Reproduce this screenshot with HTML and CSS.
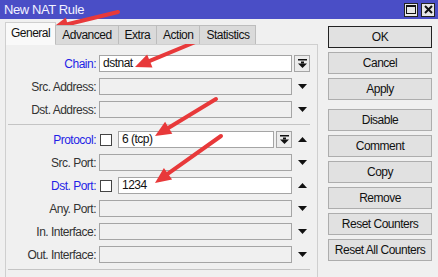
FILE: index.html
```html
<!DOCTYPE html>
<html lang="en">
<head>
    <meta charset="UTF-8">
    <title>New NAT Rule</title>
    <link rel="stylesheet" href="styles.css">
</head>
<body>

<div class="window">
    <div class="titlebar">
        <span class="title">New NAT Rule</span>
        <div class="title-btns">
            <span class="tbtn">
                <svg width="10" height="9" viewBox="0 0 10 9"><rect x="0.5" y="0.5" width="9" height="8" fill="none" stroke="#111"/><rect x="0" y="0" width="10" height="2" fill="#111"/></svg>
            </span>
            <span class="tbtn">
                <svg width="9" height="9" viewBox="0 0 9 9"><path d="M1 1 L8 8 M8 1 L1 8" stroke="#111" stroke-width="2"/></svg>
            </span>
        </div>
    </div>

    <div class="content">
        <div class="editor">
            <div class="tabs">
                <span class="tab active">General</span>
                <span class="tab">Advanced</span>
                <span class="tab">Extra</span>
                <span class="tab">Action</span>
                <span class="tab">Statistics</span>
            </div>
            <div class="panel">
                <div class="row">
                    <label class="lbl blue">Chain:</label>
                    <div class="field">
                        <span class="input">dstnat</span>
                    </div>
                    <span class="ddbtn side-btn">
                        <svg width="9" height="9" viewBox="0 0 9 9"><rect x="0" y="0" width="9" height="1.5" fill="#111"/><rect x="3" y="2.5" width="3" height="2" fill="#111"/><polygon points="0,4.5 9,4.5 4.5,9" fill="#111"/></svg>
                    </span>
                </div>
                <div class="row">
                    <label class="lbl">Src. Address:</label>
                    <div class="field"><span class="input off"></span></div>
                    <span class="side"><svg width="9" height="5" viewBox="0 0 9 5"><polygon points="0,0 9,0 4.5,5" fill="#111"/></svg></span>
                </div>
                <div class="row">
                    <label class="lbl">Dst. Address:</label>
                    <div class="field"><span class="input off"></span></div>
                    <span class="side"><svg width="9" height="5" viewBox="0 0 9 5"><polygon points="0,0 9,0 4.5,5" fill="#111"/></svg></span>
                </div>

                <div class="sep"></div>

                <div class="row">
                    <label class="lbl blue">Protocol:</label>
                    <div class="field">
                        <span class="chk"></span>
                        <span class="input">6 (tcp)</span>
                        <span class="ddbtn">
                            <svg width="9" height="9" viewBox="0 0 9 9"><rect x="0" y="0" width="9" height="1.5" fill="#111"/><rect x="3" y="2.5" width="3" height="2" fill="#111"/><polygon points="0,4.5 9,4.5 4.5,9" fill="#111"/></svg>
                        </span>
                    </div>
                    <span class="side"><svg width="9" height="5" viewBox="0 0 9 5"><polygon points="0,5 9,5 4.5,0" fill="#111"/></svg></span>
                </div>
                <div class="row">
                    <label class="lbl">Src. Port:</label>
                    <div class="field"><span class="input off"></span></div>
                    <span class="side"><svg width="9" height="5" viewBox="0 0 9 5"><polygon points="0,0 9,0 4.5,5" fill="#111"/></svg></span>
                </div>
                <div class="row">
                    <label class="lbl blue">Dst. Port:</label>
                    <div class="field">
                        <span class="chk"></span>
                        <span class="input">1234</span>
                    </div>
                    <span class="side"><svg width="9" height="5" viewBox="0 0 9 5"><polygon points="0,5 9,5 4.5,0" fill="#111"/></svg></span>
                </div>
                <div class="row">
                    <label class="lbl">Any. Port:</label>
                    <div class="field"><span class="input off"></span></div>
                    <span class="side"><svg width="9" height="5" viewBox="0 0 9 5"><polygon points="0,0 9,0 4.5,5" fill="#111"/></svg></span>
                </div>
                <div class="row">
                    <label class="lbl">In. Interface:</label>
                    <div class="field"><span class="input off"></span></div>
                    <span class="side"><svg width="9" height="5" viewBox="0 0 9 5"><polygon points="0,0 9,0 4.5,5" fill="#111"/></svg></span>
                </div>
                <div class="row">
                    <label class="lbl">Out. Interface:</label>
                    <div class="field"><span class="input off"></span></div>
                    <span class="side"><svg width="9" height="5" viewBox="0 0 9 5"><polygon points="0,0 9,0 4.5,5" fill="#111"/></svg></span>
                </div>

                <div class="sep"></div>
            </div>
        </div>

        <div class="actions">
            <button class="btn default">OK</button>
            <button class="btn">Cancel</button>
            <button class="btn">Apply</button>
            <button class="btn group">Disable</button>
            <button class="btn">Comment</button>
            <button class="btn">Copy</button>
            <button class="btn">Remove</button>
            <button class="btn">Reset Counters</button>
            <button class="btn">Reset All Counters</button>
        </div>
    </div>

    <!-- red annotation arrows -->
    <svg class="marks" width="438" height="277" viewBox="0 0 438 277">
        <g stroke="#e8393a" stroke-width="4" stroke-linecap="round" fill="#e8393a">
            <line x1="118" y1="12" x2="67.5" y2="24.2"/>
            <polygon stroke="none" points="52,28 65.9,17.4 69.2,31"/>
            <line x1="205" y1="38" x2="149.8" y2="60.9"/>
            <polygon stroke="none" points="135,67 147.1,54.4 152.5,67.4"/>
            <line x1="216" y1="99" x2="168.7" y2="127.7"/>
            <polygon stroke="none" points="155,136 165.1,121.7 172.3,133.7"/>
            <line x1="221" y1="136" x2="168" y2="173.7"/>
            <polygon stroke="none" points="155,183 163.9,168 172.1,179.4"/>
        </g>
    </svg>
</div>

</body>
</html>
```

FILE: styles.css
```css
body {
    margin: 0;
    padding: 0;
    background: #f0f0f0;
    overflow: hidden;
    font-family: 'Liberation Sans', Arial, sans-serif;
    font-size: 12px;
    letter-spacing: -0.5px;
    color: #111;
}
.window {
    position: relative;
    width: 438px;
    height: 277px;
    overflow: hidden;
    background: #f0f0f0;
}
.titlebar {
    height: 19px;
    background: #4a4ec6;
    display: flex;
    align-items: center;
    justify-content: space-between;
    padding: 0 3px 0 4px;
}
.title {
    color: #f2f2ff;
    font-size: 13px;
    letter-spacing: -0.4px;
}
.title-btns {
    display: flex;
    gap: 3px;
}
.tbtn {
    width: 14px;
    height: 14px;
    box-sizing: border-box;
    border: 1px solid #222;
    background: #e6e6e6;
    display: flex;
    align-items: center;
    justify-content: center;
}
.content {
    display: flex;
    padding-left: 5px;
    gap: 10px;
}
.editor {
    width: 313px;
}
.tabs {
    display: flex;
    align-items: flex-end;
    height: 22px;
    margin-top: 3px;
    position: relative;
    z-index: 1;
}
.tab {
    height: 19px;
    box-sizing: border-box;
    padding: 0 6px;
    line-height: 18px;
    background: #dadada;
    border: 1px solid #bdbdbd;
    border-bottom: none;
    margin-right: -1px;
}
.tab.active {
    height: 23px;
    line-height: 21px;
    padding: 0 5px;
    background: #f9f9f9;
    border-color: #cfcfcf;
    margin-bottom: -1px;
}
.panel {
    border: 1px solid #cfcfcf;
    padding-top: 10px;
    height: 240px;
    box-sizing: border-box;
}
.row {
    display: flex;
    align-items: center;
    height: 17px;
    margin-bottom: 6px;
}
.lbl {
    width: 90px;
    text-align: right;
    color: #333;
    margin-right: 3px;
}
.lbl.blue {
    color: #1f1fe6;
}
.field {
    width: 193px;
    height: 17px;
    display: flex;
    align-items: center;
}
.input {
    flex: 1;
    height: 17px;
    box-sizing: border-box;
    border: 1px solid #a5a5a5;
    background: #fff;
    padding-left: 3px;
    line-height: 15px;
    color: #111;
}
.input.off {
    background: #f0f0f0;
}
.chk {
    width: 12px;
    height: 12px;
    box-sizing: border-box;
    border: 1px solid #444;
    background: #fff;
    margin: 0 6px 0 1px;
}
.ddbtn {
    width: 16px;
    height: 17px;
    box-sizing: border-box;
    border: 1px solid #a5a5a5;
    background: #ececec;
    margin-left: 2px;
    display: flex;
    align-items: center;
    justify-content: center;
}
.side {
    width: 16px;
    margin-left: 2px;
    display: flex;
    justify-content: center;
}
.side-btn {
    margin-left: 2px;
}
.sep {
    height: 1px;
    background: #c4c4c4;
    margin: 1px 7px 6px 2px;
}
.actions {
    width: 104px;
    padding-top: 7px;
    display: flex;
    flex-direction: column;
    gap: 4px;
}
.btn {
    height: 22px;
    box-sizing: border-box;
    border: 1px solid #adadad;
    background: #e1e1e1;
    font-family: inherit;
    font-size: 12px;
    letter-spacing: -0.5px;
    color: #111;
    padding: 0;
}
.btn.default {
    border: 1px solid #222;
    box-shadow: inset 0 0 0 1px #e1e1e1;
}
.btn.group {
    margin-top: 5px;
}
.marks {
    position: absolute;
    top: 0;
    left: 0;
    pointer-events: none;
}
```
